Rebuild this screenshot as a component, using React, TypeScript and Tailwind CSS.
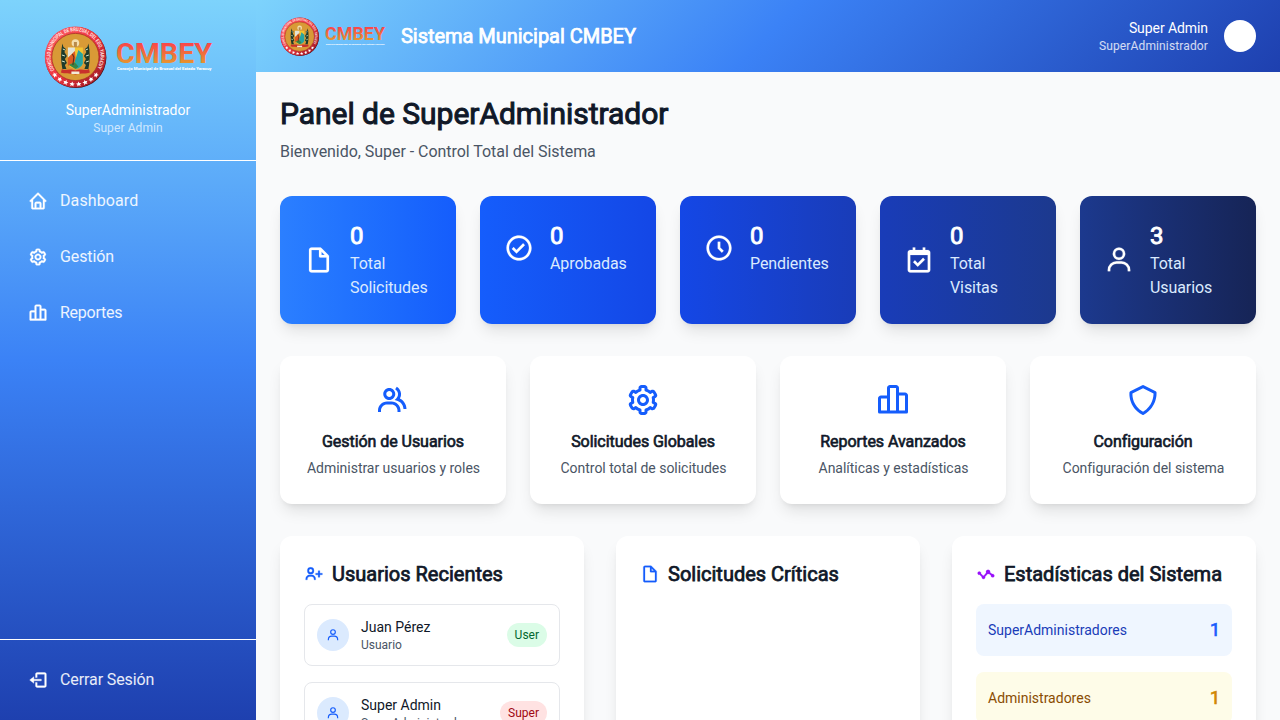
import type { ReactNode } from "react";
import type { IconType } from "react-icons";
import {
  BiHome,
  BiCog,
  BiBarChartAlt2,
  BiLogOut,
  BiFileBlank,
  BiCheckCircle,
  BiTimeFive,
  BiCalendarCheck,
  BiUser,
  BiGroup,
  BiShield,
  BiUserPlus,
  BiStats,
} from "react-icons/bi";

function Logo({ id, className }: { id: string; className: string }) {
  return (
    <svg viewBox="0 0 168 64" className={`overflow-visible ${className}`} aria-label="CMBEY">
      <defs>
        <linearGradient id={`${id}-word`} x1="0" y1="0" x2="0" y2="1">
          <stop offset="0.15" stopColor="#fb3f4c" />
          <stop offset="0.85" stopColor="#e59a2c" />
        </linearGradient>
        <linearGradient id={`${id}-ring`} x1="0" y1="0" x2="1" y2="1">
          <stop offset="0" stopColor="#ff6068" />
          <stop offset="0.5" stopColor="#ee343f" />
          <stop offset="1" stopColor="#8c1420" />
        </linearGradient>
        <path id={`${id}-arc`} d="M11.2 46 A25 25 0 1 1 52.800 46" />
      </defs>
      <g transform="translate(-0.6 0)">
        <circle cx="32.4" cy="33.500" r="30.6" fill="#3a0d14" />
        <circle cx="32" cy="33" r="30.6" fill={`url(#${id}-ring)`} />
        <circle cx="32" cy="33" r="23.600" fill="#d99a36" stroke="#a83426" strokeWidth="0.8" />
        <text fontFamily="Roboto" fontWeight="700" fontSize="5.2" fill="#ffe9e6">
          <textPath href={`#${id}-arc`} textLength="105" lengthAdjust="spacingAndGlyphs">
            CONCEJO MUNICIPAL DE BRUZUAL DEL EDO. YARACUY
          </textPath>
        </text>
        <g transform="translate(1 1)">
          <g fill="#fff">
            {[-49, -35, -21, -7, 7, 21, 35, 49].map((a) => (
              <path
                key={a}
                transform={`rotate(${a} 31 32)`}
                d="M31 56.600l.8 1.700 1.900.2-1.400 1.200.4 1.800-1.700-1-1.700 1 .4-1.800-1.400-1.200 1.900-.2z"
              />
            ))}
          </g>
          <path d="M17.5 44c3 2.400 7-1 13.500 1.500C37.500 43 41.500 46.400 44.500 44l1 3.500c-4 1.500-8 .5-14.500 2-6.500-1.500-10.500-.5-14.500-2z" fill="#c9302c" />
          <path d="M18 18.500c-1.800 8-1.800 17 0 25.500h4l-1.500-4 2-2-2-4 2-3-2.500-4 1.500-3-2.500-2z" fill="#1d3b2c" />
          <path d="M44 18.500c1.800 8 1.800 17 0 25.500h-4l1.500-4-2-2 2-4-2-3 2.500-4-1.500-3 2.500-2z" fill="#1d3b2c" />
          <path d="M18.400 24l2.400 1M17.500 30l3 1M17.500 36l3 1M43.600 24l-2.400 1M44.500 30l-3 1M44.500 36l-3 1" stroke="#d9e8c8" strokeWidth="1" />
          <circle cx="31" cy="18" r="3.800" fill="#f4dfae" />
          <path d="M29.500 17h3v5h-3z" fill="#b98b4b" />
          <path d="M23.500 22.500h15V38c0 3-3 5-7.500 6-4.500-1-7.500-3-7.500-6z" fill="#f3c431" />
          <path d="M23.500 22.500h7v4l-7 6z" fill="#e3e4d8" />
          <path d="M23.500 33l7-7 1 10-8 5z" fill="#dd5a23" />
          <path d="M34 25l4.500 4v9.500c-1 3-3.500 4.500-7 5.500l-1-8z" fill="#27a4a2" />
          <path d="M24.500 40l5.500-3 4 4.500-3 2.500z" fill="#388546" />
          <path d="M28 29l1.500 3-1 8" stroke="#5e2f18" strokeWidth="1.100" fill="none" />
          <path d="M27 46.500h8v2.500h-8z" fill="#f3ebd8" />
        </g>
      </g>
      <text
        x="72"
        y="38.600"
        fontFamily="Roboto"
        fontWeight="700"
        fontSize="28.500"
        textLength="96"
        lengthAdjust="spacingAndGlyphs"
        fill={`url(#${id}-word)`}
      >
        CMBEY
      </text>
      <text
        x="73"
        y="45.600"
        fontFamily="Roboto"
        fontWeight="800"
        fontSize="4"
        textLength="94.500"
        lengthAdjust="spacingAndGlyphs"
        fill="#fff"
      >
        Concejo Municipal de Bruzual del Estado Yaracuy
      </text>
    </svg>
  );
}

function NavItem({ icon: Icon, label, tracking = "" }: { icon: IconType; label: string; tracking?: string }) {
  return (
    <button className="flex h-12 w-full items-center gap-3 px-3 text-left text-white/90">
      <Icon className="size-5 stroke-current text-white [stroke-width:0.4]" />
      <span className={tracking}>{label}</span>
    </button>
  );
}

const stats: { icon: IconType; value: string; label: string; tone: string }[] = [
  { icon: BiFileBlank, value: "0", label: "Total Solicitudes", tone: "from-[#2b7fff] to-[#155dfc]" },
  { icon: BiCheckCircle, value: "0", label: "Aprobadas", tone: "from-[#155dfc] to-[#1447e6]" },
  { icon: BiTimeFive, value: "0", label: "Pendientes", tone: "from-[#1447e6] to-[#193cb8]" },
  { icon: BiCalendarCheck, value: "0", label: "Total Visitas", tone: "from-[#193cb8] to-[#1c398e]" },
  { icon: BiUser, value: "3", label: "Total Usuarios", tone: "from-[#1c398e] to-[#162456]" },
];

const actions: { icon: IconType; title: string; text: string }[] = [
  { icon: BiGroup, title: "Gestión de Usuarios", text: "Administrar usuarios y roles" },
  { icon: BiCog, title: "Solicitudes Globales", text: "Control total de solicitudes" },
  { icon: BiBarChartAlt2, title: "Reportes Avanzados", text: "Analíticas y estadísticas" },
  { icon: BiShield, title: "Configuración", text: "Configuración del sistema" },
];

const users = [
  { name: "Juan Pérez", role: "Usuario", badge: "User", tone: "bg-green-100 text-green-800" },
  { name: "Super Admin", role: "SuperAdministrador", badge: "Super", tone: "bg-red-100 text-red-800" },
];

function Panel({ icon: Icon, color, title, children }: { icon: IconType; color: string; title: string; children?: ReactNode }) {
  return (
    <section className="min-h-[320px] rounded-xl bg-white p-6 shadow-lg">
      <h2 className="mb-4 flex items-center gap-2 text-xl whitespace-nowrap text-gray-900 [-webkit-text-stroke:0.75px]">
        <Icon className={`size-5 stroke-current [stroke-width:0.3] ${color}`} />
        {title}
      </h2>
      {children}
    </section>
  );
}

export default function App() {
  return (
    <div className="flex h-screen overflow-hidden bg-gray-50 font-[Roboto,sans-serif] text-base">
      <aside className="flex w-64 shrink-0 flex-col bg-[linear-gradient(180deg,#7dd3fc_0%,#3b82f6_50%,#1e40af_100%)]">
        <div className="flex h-[161px] flex-col items-center border-b border-white pt-6">
          <Logo id="side" className="mb-3 h-16 w-[168px]" />
          <p className="text-sm text-white">SuperAdministrador</p>
          <p className="text-xs tracking-[0.1px] text-white/70">Super Admin</p>
        </div>
        <nav className="flex flex-1 flex-col gap-2 p-4">
          <NavItem icon={BiHome} label="Dashboard" tracking="tracking-[0.1px]" />
          <NavItem icon={BiCog} label="Gestión" tracking="tracking-[-0.1px]" />
          <NavItem icon={BiBarChartAlt2} label="Reportes" tracking="tracking-[-0.25px]" />
        </nav>
        <div className="border-t border-white p-4">
          <NavItem icon={BiLogOut} label="Cerrar Sesión" tracking="tracking-[-0.1px]" />
        </div>
      </aside>
      <div className="flex min-w-0 flex-1 flex-col">
        <header className="flex h-[72px] shrink-0 items-center justify-between bg-[linear-gradient(135deg,#7dd3fc_0%,#3b82f6_50%,#1e40af_100%)] px-6">
          <div className="flex items-center gap-4">
            <Logo id="head" className="h-10 w-[105px]" />
            <h1 className="text-xl tracking-[-0.03px] text-white [-webkit-text-stroke:0.75px]">Sistema Municipal CMBEY</h1>
          </div>
          <div className="flex items-center gap-4">
            <div className="text-right">
              <p className="text-sm tracking-[-0.08px] text-white">Super Admin</p>
              <p className="text-xs tracking-[0.13px] text-white/80">SuperAdministrador</p>
            </div>
            <div className="size-8 rounded-full bg-white" />
          </div>
        </header>
        <main className="flex-1 overflow-hidden p-6">
          <h2 className="mb-2 text-3xl tracking-[-0.03px] text-gray-900 [-webkit-text-stroke:1px]">Panel de SuperAdministrador</h2>
          <p className="mb-8 tracking-[-0.04px] text-gray-600">Bienvenido, Super - Control Total del Sistema</p>
          <div className="mb-8 grid grid-cols-5 gap-6">
            {stats.map(({ icon: Icon, value, label, tone }) => (
              <div key={label} className={`rounded-xl bg-linear-to-r p-6 text-white shadow-lg ${tone}`}>
                <div className="flex items-center">
                  <Icon className="mr-4 size-[30px] shrink-0 stroke-current [stroke-width:0.15]" />
                  <div>
                    <p className="text-2xl [-webkit-text-stroke:0.9px]">{value}</p>
                    <p className="tracking-[-0.08px] text-blue-100">{label}</p>
                  </div>
                </div>
              </div>
            ))}
          </div>
          <div className="mb-8 grid grid-cols-4 gap-6">
            {actions.map(({ icon: Icon, title, text }) => (
              <div key={title} className="flex h-[148px] flex-col items-center rounded-xl bg-white pt-[26px] text-center shadow-lg">
                <Icon className="mb-3 size-9 text-blue-600" />
                <h3 className="mb-1 tracking-[-0.05px] text-gray-900 [-webkit-text-stroke:0.65px]">{title}</h3>
                <p className="pl-px text-sm tracking-[-0.03px] text-gray-600">{text}</p>
              </div>
            ))}
          </div>
          <div className="grid grid-cols-3 gap-8">
            <Panel icon={BiUserPlus} color="text-blue-600" title="Usuarios Recientes">
              <div className="flex flex-col gap-4">
                {users.map((u) => (
                  <div key={u.name} className="flex items-center rounded-lg border border-gray-200 p-3">
                    <div className="mr-3 flex size-8 items-center justify-center rounded-full bg-blue-100">
                      <BiUser className="size-3.5 text-blue-600" />
                    </div>
                    <div className="flex-1">
                      <p className="text-sm text-gray-900">{u.name}</p>
                      <p className="text-xs text-gray-600">{u.role}</p>
                    </div>
                    <span className={`rounded-full px-2 py-1 text-xs ${u.tone}`}>{u.badge}</span>
                  </div>
                ))}
              </div>
            </Panel>
            <Panel icon={BiFileBlank} color="text-blue-600" title="Solicitudes Críticas" />
            <Panel icon={BiStats} color="text-purple-600" title="Estadísticas del Sistema">
              <div className="flex flex-col gap-4">
                <div className="flex h-[52px] items-center justify-between rounded-lg bg-blue-50 px-3">
                  <span className="text-sm text-blue-800">SuperAdministradores</span>
                  <span className="text-lg text-blue-600 [-webkit-text-stroke:0.7px]">1</span>
                </div>
                <div className="flex h-[52px] items-center justify-between rounded-lg bg-yellow-50 px-3">
                  <span className="text-sm text-yellow-800">Administradores</span>
                  <span className="text-lg text-yellow-600 [-webkit-text-stroke:0.7px]">1</span>
                </div>
              </div>
            </Panel>
          </div>
        </main>
      </div>
    </div>
  );
}
